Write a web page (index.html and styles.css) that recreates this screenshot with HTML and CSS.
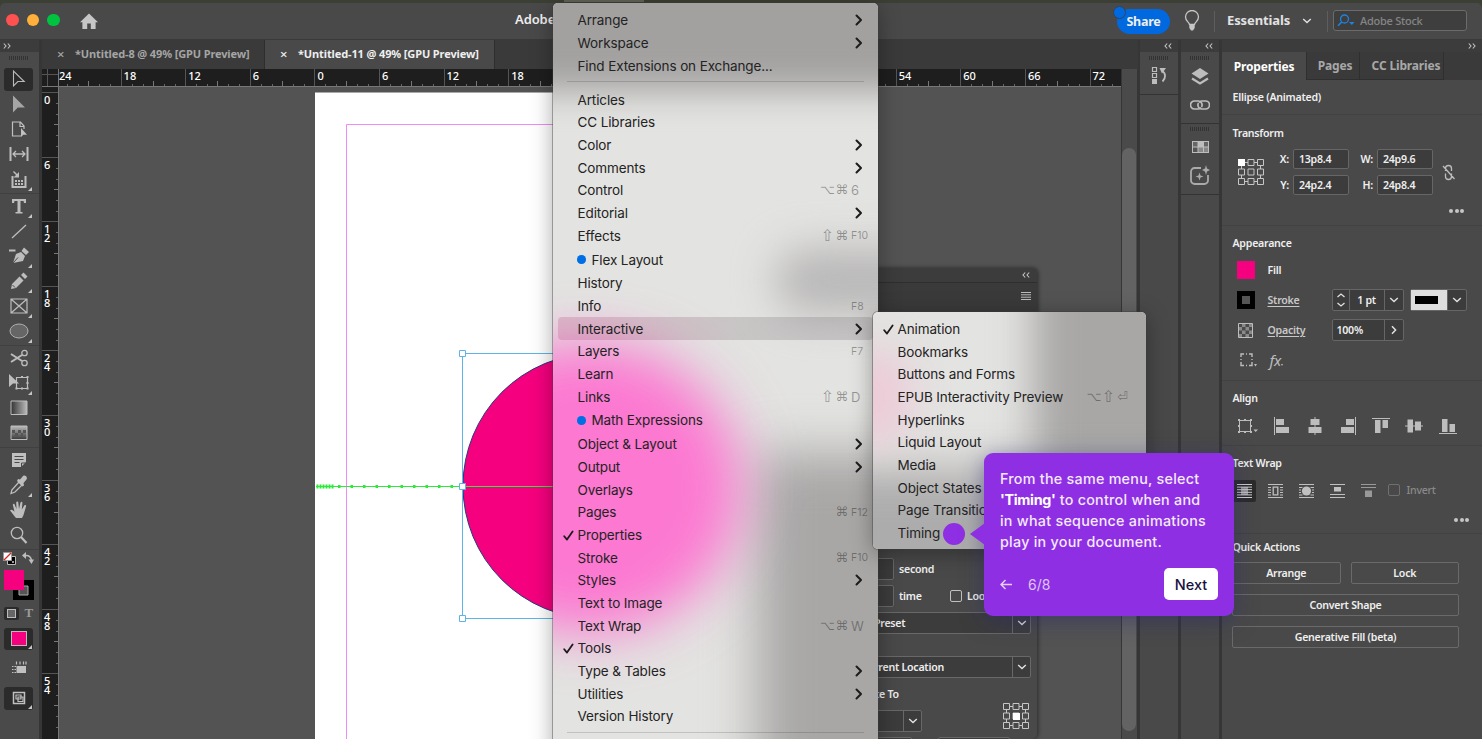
FILE: index.html
```html
<!DOCTYPE html>
<html lang="en">
<head>
    <meta charset="UTF-8">
    <meta name="viewport" content="width=device-width, initial-scale=1.0">
    <title>Adobe InDesign</title>
    <link rel="stylesheet" href="styles.css">
</head>
<body>
<svg class="defs" width="0" height="0">
    <symbol id="chev" viewBox="0 0 8 12"><path d="M1.5 1.5 6 6 1.5 10.5" fill="none" stroke="#1c1c1c" stroke-width="2" stroke-linecap="round" stroke-linejoin="round"/></symbol>
    <symbol id="check" viewBox="0 0 11 11"><path d="M1.2 6.2 4 9.6 9.6 1.4" fill="none" stroke="#1c1c1c" stroke-width="1.8" stroke-linecap="round" stroke-linejoin="round"/></symbol>
    <symbol id="down" viewBox="0 0 10 6"><path d="M1.2 1 5 4.6 8.8 1" fill="none" stroke="#e0e0e0" stroke-width="1.4"/></symbol>
    <symbol id="left2" viewBox="0 0 8 6"><path d="M3.2.5 1 3l2.2 2.5M7.2.5 5 3l2.2 2.5" fill="none" stroke="#c4c4c4" stroke-width="1.1"/></symbol>
    <symbol id="right2" viewBox="0 0 8 6"><path d="M.8.5 3 3 .8 5.5M4.8.5 7 3 4.8 5.5" fill="none" stroke="#c4c4c4" stroke-width="1.1"/></symbol>
    <symbol id="proxy" viewBox="0 0 26 26"><path d="M.5.5h6v6h-6zM10 .5h6v6h-6zM19.5.5h6v6h-6zM.5 10h6v6h-6zM10 10h6v6h-6zM19.5 10h6v6h-6zM.5 19.5h6v6h-6zM10 19.5h6v6h-6zM19.5 19.5h6v6h-6zM6.500 3.500h3.500M16 3.500h3.500M6.500 22.500h3.500M16 22.500h3.500M3.500 6.500v3.500M3.500 16v3.500M22.500 6.500v3.500M22.500 16v3.500" fill="none" stroke="#c6c6c6"/></symbol>
</svg>

<div class="app">
    <div class="mac-bar"><div class="mac-item"></div></div>
    <div class="title-bar">
        <div class="lights"><i class="red"></i><i class="amber"></i><i class="green"></i></div>
        <svg class="home" width="18" height="17" viewBox="0 0 18 17"><path d="M9 .5 0 9.200h2.400V16h4.800v-5.500h3.600V16h4.800V9.200H18z" fill="#c6c6c6"/></svg>
        <div class="app-name">Adobe</div>
        <div class="title-right">
            <div class="share">Share</div>
            <svg class="bulb" width="16" height="22" viewBox="0 0 16 22"><path d="M5.500 14.500C5 12 1.500 11 1.500 7a6.500 6.500 0 0 1 13 0c0 4-3.500 5-4 7.500z" fill="none" stroke="#c6c6c6" stroke-width="1.300"/><path d="M5.300 15h5.400v3L9 20.500H7L5.300 18z" fill="#c6c6c6"/></svg>
            <div class="bar"></div>
            <div class="workspace-name">Essentials</div>
            <svg class="ws-chev" width="10" height="6"><use href="#down"/></svg>
            <div class="bar"></div>
            <div class="search">
                <svg width="18" height="13" viewBox="0 0 18 13"><circle cx="7.500" cy="5" r="4" fill="none" stroke="#1f83dc" stroke-width="1.300"/><path d="M4.700 8 1 11.800" stroke="#1f83dc" stroke-width="1.600"/><path d="M12 8h5.500l-2.700 3z" fill="#1f83dc"/></svg>
                <span>Adobe Stock</span>
            </div>
        </div>
    </div>

    <div class="workspace">
        <div class="tools">
            <div class="dock-head left"><svg width="8" height="6"><use href="#right2"/></svg></div>
            <div class="grip"></div>
            <div class="tool-group first">
                <div class="tool active"><svg viewBox="0 0 20 20"><path d="M4.500 2v15l4.300-4.500h6.400z" fill="none" stroke="#b9b9b9" stroke-width="1.100"/></svg></div>
                <div class="tool"><svg viewBox="0 0 20 20"><path d="M4 1.500v17l4.800-5h7.200z" fill="#a5a5a5"/></svg></div>
                <div class="tool"><svg viewBox="0 0 20 20"><path d="M12 17H3.500V3h8l3.500 4v3M11 3v4.500h4" fill="none" stroke="#c0c0c0" stroke-width="1.200"/><path d="M12 9v9l2.300-2.200H18z" fill="#c0c0c0"/></svg></div>
                <div class="tool"><svg viewBox="0 0 20 20"><path d="M1.500 3v14M18.500 3v14" stroke="#bdbdbd" stroke-width="2"/><path d="M4 10h12M7 7l-3 3 3 3M13 7l3 3-3 3" fill="none" stroke="#bdbdbd" stroke-width="1.300"/></svg></div>
                <div class="tool more"><svg viewBox="0 0 20 20"><path d="M3.500 7v11h13V7" fill="none" stroke="#bdbdbd" stroke-width="2"/><path d="M6 11h2v2H6zM9 11h2v2H9zM12 11h2v2h-2zM6 14h2v2H6zM9 14h2v2H9zM12 14h2v2h-2zM10 3v5.500H4.500z" fill="#bdbdbd"/><path d="m4.500 2.500 4 4" stroke="#bdbdbd" stroke-width="1.500"/></svg></div>
            </div>
            <div class="tool-group">
                <div class="tool more"><svg viewBox="0 0 20 20"><path d="M3 3h14v4h-2l-.5-2h-3v11h2v1.500h-7V16h2V5h-3L5 7H3z" fill="#bdbdbd"/></svg></div>
                <div class="tool"><svg viewBox="0 0 20 20"><path d="M3 17 17 4" stroke="#bdbdbd" stroke-width="1.300"/></svg></div>
                <div class="tool more"><svg viewBox="0 0 20 20"><path d="M-1.500 4.500h8" stroke="#bdbdbd" stroke-width="2"/><path d="m4 17 3-9 5-2 4 4-2 5z" fill="#bdbdbd"/><path d="m4 17 5-5.500" stroke="#4a4a4a"/><path d="m12.500 5 2.500-3.500L20 6l-3 3z" fill="#bdbdbd"/></svg></div>
                <div class="tool more"><svg viewBox="0 0 20 20"><path d="m2 18 1-5 7.500-7.500 4 4L7 17zM12 4l2.500-2.500 4 4L16 8z" fill="#bdbdbd"/><path d="m3.500 14 2.500 2.500" stroke="#4a4a4a"/></svg></div>
                <div class="tool more"><svg viewBox="0 0 20 20"><path d="M2 3h16v14H2zM2 3l16 14M18 3 2 17" fill="none" stroke="#bdbdbd" stroke-width="1.200"/></svg></div>
                <div class="tool more"><svg viewBox="0 0 20 20"><ellipse cx="10" cy="10" rx="9" ry="7" fill="#666" stroke="#b0b0b0"/></svg></div>
            </div>
            <div class="tool-group">
                <div class="tool"><svg viewBox="0 0 20 20"><path d="m2 6 11 7M2 14l11-7" stroke="#bdbdbd" stroke-width="2"/><circle cx="15.500" cy="5" r="2.700" fill="none" stroke="#bdbdbd" stroke-width="1.300"/><circle cx="15.500" cy="15" r="2.700" fill="none" stroke="#bdbdbd" stroke-width="1.300"/></svg></div>
                <div class="tool more"><svg viewBox="0 0 20 20"><path d="M7.500 4.500h11v11h-11z" fill="none" stroke="#bdbdbd" stroke-width="1.200"/><path d="M12 3h2v2h-2zM17.500 3h2v2h-2zM17.500 9h2v2h-2zM17.500 14.500h2v2h-2zM12 14.500h2v2h-2zM6.500 14.500h2v2h-2zM0 1v13l4-3.500h6z" fill="#bdbdbd"/></svg></div>
                <div class="tool"><svg viewBox="0 0 20 20"><linearGradient id="fade"><stop stop-color="#333"/><stop offset="1" stop-color="#bbb"/></linearGradient><path d="M2 3h16v13.500H2z" fill="url(#fade)" stroke="#bdbdbd"/></svg></div>
                <div class="tool"><svg viewBox="0 0 20 20"><linearGradient id="fade-v" x2="0" y2="1"><stop stop-color="#bbb"/><stop offset="1" stop-color="#3a3a3a"/></linearGradient><path d="M2 3h16v13.500H2z" fill="url(#fade-v)" stroke="#bdbdbd"/><path d="M3 7h3v3H3zM9 7h3v3H9zM14 7h3v3h-3zM6 10h3v3H6zM12 10h2v3h-2z" fill="#555"/></svg></div>
            </div>
            <div class="tool-group">
                <div class="tool"><svg viewBox="0 0 20 20"><path d="M3 3h14v9l-5 5H3z" fill="#c0c0c0"/><path d="M5.500 6.500h9M5.500 9.500h9M5.500 12.500h5" stroke="#4a4a4a" stroke-width="1.200"/><path d="M12.500 17v-4h4.500" fill="none" stroke="#4a4a4a"/></svg></div>
                <div class="tool more"><svg viewBox="0 0 20 20"><path d="m10 7 3 3-7 7-4 1.500.8-3.500z" fill="none" stroke="#bdbdbd" stroke-width="1.300"/><path d="m9 4 2 .5 3-3.500c2-1.500 5 1 3.500 3.500L14.500 8l.5 2.500-1.500 1L8 6z" fill="#bdbdbd"/></svg></div>
                <div class="tool"><svg viewBox="0 0 20 20"><path d="M7 18c-2-2-4-5.500-6-7.500 1-1.500 2.800-.5 4.500 1.200L3.800 4.800c.3-1.500 1.800-1 2 .2L7.500 9 7.200 2.500c.3-1.500 2-1.300 2.100 0L10 9l1.500-6.500c.5-1.300 2-1 1.900.5L12.800 9.500l2.500-4c.8-1 2.200-.3 1.700 1L14.500 15 13 18z" fill="#bdbdbd"/></svg></div>
                <div class="tool"><svg viewBox="0 0 20 20"><circle cx="8" cy="8" r="5.700" fill="none" stroke="#bdbdbd" stroke-width="1.300"/><path d="m12 12 5.500 6" stroke="#bdbdbd" stroke-width="2.200"/></svg></div>
            </div>
            <div class="tool-group swatches">
                <div class="mini-row">
                    <svg width="13" height="13" viewBox="0 0 13 13"><path d="M4.500 4.500h8v8h-8z" fill="#000" stroke="#bbb"/><path d="M.5.5h8v8h-8z" fill="#fff" stroke="#999"/><path d="m1 8 7-7" stroke="#e02020" stroke-width="1.200"/><path d="M9 9h2v2H9z" fill="#999"/></svg>
                    <svg width="12" height="12" viewBox="0 0 12 12"><path d="M3 3.500c4-.5 6 1.500 6.500 5" fill="none" stroke="#bdbdbd" stroke-width="1.500"/><path d="M4 0v7L0 3.500zM6.500 7.500H12L9.500 12z" fill="#bdbdbd"/></svg>
                </div>
                <svg class="fill-stroke" width="30" height="30" viewBox="0 0 30 30"><path d="M9 10h21v20H9z"/><path d="M15 16h9v9h-9z" fill="#555" stroke="#aaa"/><path d="M0 0h20v20H0z" fill="#f5007e"/></svg>
                <div class="mini-row target">
                    <div class="mini-box"><i></i></div>
                    <span>T</span>
                </div>
                <div class="tool active more apply"><i></i></div>
                <div class="tool tall"><svg viewBox="0 0 20 20"><path d="M7.500 8H17v7H7.500z" fill="#c0c0c0"/><path d="M7.500 3.500v3M11 3.500v3M14.500 3.500v3M17 3.500v3" stroke="#c0c0c0" stroke-width="1.200"/><path d="M3 8.500h4M3 11.500h4M3 14.500h4" stroke="#c0c0c0" stroke-width="1.200" stroke-dasharray="1.500 1"/></svg></div>
                <div class="tool active more mode"><svg viewBox="0 0 20 20"><path d="M4.500 4.500h11v11h-11z" fill="none" stroke="#c0c0c0" stroke-width="1.500"/><path d="M7 7h5v4H7zM9 9h5v4.500H9z" fill="none" stroke="#c0c0c0" stroke-width="1.200"/></svg></div>
            </div>
        </div>

        <div class="document">
            <div class="tabs">
                <div class="tab"><span class="x">×</span>*Untitled-8 @ 49% [GPU Preview]</div>
                <div class="tab current"><span class="x">×</span>*Untitled-11 @ 49% [GPU Preview]</div>
            </div>
            <div class="view">
                <div class="view-main">
                    <div class="ruler-top">
                        <div class="corner"></div>
                        <div class="ruler-h">
                            <span>24</span><span>18</span><span>12</span><span>6</span><span>0</span><span>6</span><span>12</span><span>18</span><span></span><span></span><span></span><span></span><span></span><span>54</span><span>60</span><span>66</span><span>72</span>
                        </div>
                    </div>
                    <div class="view-row">
                        <div class="ruler-v">
                            <span>0</span><span>6</span><span>1<br>2</span><span>1<br>8</span><span>2<br>4</span><span>3<br>0</span><span>3<br>6</span><span>4<br>2</span><span>4<br>8</span><span>5<br>4</span>
                        </div>
                        <svg class="canvas" width="1062" height="652" viewBox="59 87 1062 652">
                            <rect x="315" y="92.500" width="440" height="660" fill="#fff"/>
                            <path d="M346.500 739V124.500H720V739" fill="none" stroke="#ee8df5"/>
                            <circle cx="595.500" cy="486" r="132.500" fill="#f5007e" stroke="#26397c"/>
                            <rect x="462.500" y="353.500" width="266" height="265" fill="none" stroke="#5fb4e5"/>
                            <path d="M316 486.500h300" stroke="#2ee83c" stroke-width="1.200"/>
                            <path d="M316.500 486.500h18" stroke="#2ee83c" stroke-width="4" stroke-dasharray="2 1"/>
                            <path d="M338 486.500h122" stroke="#2ee83c" stroke-width="3" stroke-dasharray="2.500 10"/>
                            <path d="M459.500 350.500h6v6h-6zM459.500 483.500h6v6h-6zM459.500 615.500h6v6h-6z" fill="#fff" stroke="#5fb4e5"/>
                        </svg>
                    </div>
                </div>
                <div class="scroll"><div class="thumb"></div></div>
            </div>
        </div>

        <div class="dock">
            <div class="dock-head"><svg width="8" height="6"><use href="#left2"/></svg></div>
            <div class="dock-group one">
                <div class="grip"></div>
                <svg width="18" height="20" viewBox="0 0 18 20"><path d="M2.500 1.500h4v4h-4zM2.500 7.500h4v4h-4z" fill="none" stroke="#bdbdbd" stroke-width="1.200"/><path d="M2 13h5v5H2zM9.500 2H16l-4 5.500z" fill="#bdbdbd"/><path d="M12 5c4 2 4 7 .5 10.500" fill="none" stroke="#bdbdbd" stroke-width="1.800"/></svg>
            </div>
        </div>
        <div class="dock">
            <div class="dock-head"><svg width="8" height="6"><use href="#left2"/></svg></div>
            <div class="dock-group two">
                <div class="grip"></div>
                <svg width="18" height="18" viewBox="0 0 18 18"><path d="m9 0 8.500 5.500L9 11 .5 5.500z" fill="#bdbdbd"/><path d="m1 10.500 8 5 8-5" fill="none" stroke="#bdbdbd" stroke-width="2.200"/></svg>
                <svg width="20" height="10" viewBox="0 0 20 10"><path d="M11 7.500A4 4 0 0 1 8.500 9h-4a4 4 0 0 1 0-8h4a4 4 0 0 1 3 6M9 2.500A4 4 0 0 1 11.500 1h4a4 4 0 0 1 0 8h-4a4 4 0 0 1-3-6" fill="none" stroke="#bdbdbd" stroke-width="1.700"/></svg>
            </div>
            <div class="dock-group three">
                <div class="grip"></div>
                <svg width="17" height="12" viewBox="0 0 17 12"><path d="M0 0h17v12H0z" fill="#bdbdbd"/><path d="M1 1h4.500v4.500H1zM12 1h4v4.500h-4z" fill="#666"/><path d="M1 6.500h4.500V11H1z" fill="#555"/><path d="M6.500 6.500H11V11H6.500zM12 6.500h4V11h-4z" fill="#888"/></svg>
                <svg width="20" height="21" viewBox="0 0 20 21"><path d="M11 3H4.500A3.500 3.500 0 0 0 1 6.500v9A3.500 3.500 0 0 0 4.500 19h10a3.500 3.500 0 0 0 3.500-3.500V10" fill="none" stroke="#aaa" stroke-width="1.800"/><path d="m16 0 1 3.500L20 5l-3 1.500L16 10l-1-3.500L12 5l3-1.500zM9.500 7.500l1 3 3 1-3 1-1 3-1-3-3-1 3-1z" fill="#aaa"/></svg>
            </div>
        </div>

        <div class="props">
            <div class="dock-head"><svg width="8" height="6"><use href="#right2"/></svg></div>
            <div class="props-tabs">
                <div class="ptab on">Properties</div><div class="ptab">Pages</div><div class="ptab">CC Libraries</div>
            </div>
            <div class="section object">Ellipse (Animated)</div>
            <div class="section transform">
                <h4>Transform</h4>
                <div class="xform">
                    <svg class="proxy" width="26" height="26"><use href="#proxy"/><rect width="7" height="7" fill="#fff"/></svg>
                    <div class="fields">
                        <label>X:</label><div class="input">13p8.4</div><label>W:</label><div class="input">24p9.6</div>
                        <label>Y:</label><div class="input">24p2.4</div><label>H:</label><div class="input">24p8.4</div>
                    </div>
                    <svg class="unlink" width="14" height="17" viewBox="0 0 14 17"><path d="M3.500 7V4.500a3 3 0 0 1 6 0V7M3.500 9.500v3a3 3 0 0 0 6 0v-3M1 2l11.500 13" fill="none" stroke="#bdbdbd" stroke-width="1.300"/></svg>
                </div>
                <div class="dots"><i></i><i></i><i></i></div>
            </div>
            <div class="section appearance">
                <h4>Appearance</h4>
                <div class="arow"><div class="sw pink"></div><span>Fill</span></div>
                <div class="arow"><div class="sw black"></div><span class="link">Stroke</span>
                    <div class="combo stroke-w"><div class="cell step"><svg width="8" height="14" viewBox="0 0 8 14"><path d="m.5 4 3.500-3 3.500 3M.5 10 4 13l3.500-3" fill="none" stroke="#e0e0e0" stroke-width="1.300"/></svg></div><div class="cell val">1 pt</div><div class="cell drop"><svg width="10" height="6"><use href="#down"/></svg></div></div>
                    <div class="combo style"><div class="cell light"><i></i></div><div class="cell drop"><svg width="10" height="6"><use href="#down"/></svg></div></div>
                </div>
                <div class="arow"><svg class="sw-opacity" width="15" height="15" viewBox="0 0 15 15"><path d="M.5.5h14v14H.5z" fill="#4a4a4a" stroke="#bdbdbd"/><path d="M4 1h3.500v3H4zM11 1h3v3h-3zM1 4h3v3.500H1zM7.500 4H11v3.500H7.500zM4 7.500h3.500V11H4zM11 7.500h3V11h-3zM1 11h3v3H1zM7.500 11H11v3H7.500z" fill="#8a8a8a"/></svg><span class="link">Opacity</span>
                    <div class="combo opacity"><div class="cell val">100%</div><div class="cell drop"><svg width="6" height="10" viewBox="0 0 6 10"><path d="M1 1.200 4.600 5 1 8.800" fill="none" stroke="#e0e0e0" stroke-width="1.500"/></svg></div></div>
                </div>
                <div class="arow last">
                    <svg width="17" height="14" viewBox="0 0 17 14"><path d="M1 4V1h3M9 1h3v3M12 9v3.500H9M4 12.500H1V9M6 1h1M6 12.500h1M1 6v1M12 6v1" fill="none" stroke="#bdbdbd" stroke-width="1.400"/><path d="M14 11h3l-1.500 2.500z" fill="#bdbdbd"/></svg>
                    <span class="fx">fx</span>
                </div>
            </div>
            <div class="section align">
                <h4>Align</h4>
                <div class="align-icons">
                    <svg width="21" height="16" viewBox="0 0 21 16"><path d="M2.500 2.500h11v11h-11z" fill="none" stroke="#bdbdbd"/><path d="M1 1h2v2H1zM7 1h2v2H7zM13 1h2v2h-2zM1 7h2v2H1zM13 7h2v2h-2zM1 13h2v2H1zM7 13h2v2H7zM13 13h2v2h-2zM16.500 11.500h4.500L18.700 14z" fill="#bdbdbd"/></svg>
                    <svg width="18" height="18" viewBox="0 0 18 18"><path d="M1.500 0v18" stroke="#bdbdbd"/><path d="M3 2h8v6H3zM3 10h13v6H3z" fill="#bdbdbd"/></svg>
                    <svg width="18" height="18" viewBox="0 0 18 18"><path d="M9 0v18" stroke="#bdbdbd"/><path d="M4.500 2h9v6h-9zM2.500 10h13v6h-13z" fill="#bdbdbd"/></svg>
                    <svg width="18" height="18" viewBox="0 0 18 18"><path d="M16.500 0v18" stroke="#bdbdbd"/><path d="M7 2h8v6H7zM2 10h13v6H2z" fill="#bdbdbd"/></svg>
                    <svg width="18" height="18" viewBox="0 0 18 18"><path d="M0 1.500h18" stroke="#bdbdbd"/><path d="M3 3h5.500v13H3zM10.500 3h5.500v8h-5.500z" fill="#bdbdbd"/></svg>
                    <svg width="18" height="18" viewBox="0 0 18 18"><path d="M0 9h18" stroke="#bdbdbd"/><path d="M2.500 2.500h5.500v13H2.500zM10 4.500h6v9h-6z" fill="#bdbdbd"/></svg>
                    <svg width="18" height="18" viewBox="0 0 18 18"><path d="M0 16.500h18" stroke="#bdbdbd"/><path d="M3 2h5.500v13H3zM10.500 7h5.500v8h-5.500z" fill="#bdbdbd"/></svg>
                </div>
            </div>
            <div class="section wrap">
                <h4>Text Wrap</h4>
                <div class="wrap-icons">
                    <div class="wi on"><svg width="15" height="14" viewBox="0 0 15 14"><path d="M0 .5h15M0 3.100h15M0 5.700h15M0 8.300h15M0 10.900h15M0 13.500h15" stroke="#d0d0d0"/><path d="M4 3h7v8H4z" fill="#d0d0d0" opacity=".6"/></svg></div>
                    <div class="wi"><svg width="15" height="14" viewBox="0 0 15 14"><path d="M0 .5h15M0 3.500h3M0 6h3M0 8.500h3M12 3.500h3M12 6h3M12 8.500h3M0 11h3M12 11h3M0 13.500h15" stroke="#c0c0c0"/><path d="M5.200 3.200h4.600v7.600H5.200z" fill="none" stroke="#c0c0c0" stroke-width="1.300"/></svg></div>
                    <div class="wi"><svg width="15" height="14" viewBox="0 0 15 14"><path d="M0 .5h15M0 3.500h3.500M0 6h2M0 8.500h2M11.500 3.500H15M13 6h2M13 8.500h2M0 11h3.500M11.500 11H15M0 13.500h15" stroke="#c0c0c0"/><circle cx="7.500" cy="7" r="4.600" fill="#c0c0c0"/></svg></div>
                    <div class="wi"><svg width="15" height="14" viewBox="0 0 15 14"><path d="M0 .5h15M0 10.500h15M0 13.500h15" stroke="#c0c0c0" stroke-width="1.200"/><path d="M4 3h7v4.500H4z" fill="#c0c0c0"/></svg></div>
                    <div class="wi dim"><svg width="15" height="14" viewBox="0 0 15 14"><path d="M0 .5h15M0 3.500h15" stroke="#999" stroke-width="1.200"/><path d="M4 6.500h7V13H4z" fill="#999"/></svg></div>
                    <div class="checkbox"></div><span>Invert</span>
                </div>
                <div class="dots"><i></i><i></i><i></i></div>
            </div>
            <div class="section quick">
                <h4>Quick Actions</h4>
                <div class="buttons">
                    <div class="btn half">Arrange</div><div class="btn half">Lock</div>
                    <div class="btn">Convert Shape</div>
                    <div class="btn">Generative Fill (beta)</div>
                </div>
            </div>
        </div>
    </div>
</div>

<!-- Animation panel, floating -->
<div class="float-panel">
    <div class="fp-head"><svg width="8" height="6"><use href="#left2"/></svg></div>
    <div class="fp-tabs"><svg width="10" height="8" viewBox="0 0 10 8"><path d="M0 .5h10M0 2.800h10M0 5.200h10M0 7.500h10" stroke="#bdbdbd"/></svg></div>
    <div class="fp-body">
        <div class="fp-row"><div class="fp-input"></div><span>second</span></div>
        <div class="fp-row"><div class="fp-input"></div><span class="time">time</span><div class="fp-check"></div><span>Loop</span></div>
        <div class="fp-select preset"><span>Preset</span><div><svg width="10" height="6"><use href="#down"/></svg></div></div>
        <div class="fp-select location"><span>Current Location</span><div><svg width="10" height="6"><use href="#down"/></svg></div></div>
        <div class="fp-label">Animate To</div>
        <div class="fp-row origin"><div class="fp-select small"><span></span><div><svg width="10" height="6"><use href="#down"/></svg></div></div>
            <svg width="26" height="26"><use href="#proxy"/><rect x="10" y="10" width="7" height="7" fill="#fff"/></svg></div>
        <div class="fp-row tail"><div class="fp-input"></div><div class="fp-input wide"></div></div>
    </div>
</div>

<!-- Window menu -->
<div class="menu main-menu">
    <div class="glass"><i class="top"></i><i class="mid"></i><i class="side"></i><i class="glow"></i></div>
    <div class="items">
        <div class="item">Arrange<svg class="chev"><use href="#chev"/></svg></div>
        <div class="item">Workspace<svg class="chev"><use href="#chev"/></svg></div>
        <div class="item">Find Extensions on Exchange...</div>
        <div class="sep"></div>
        <div class="item">Articles</div>
        <div class="item">CC Libraries</div>
        <div class="item">Color<svg class="chev"><use href="#chev"/></svg></div>
        <div class="item">Comments<svg class="chev"><use href="#chev"/></svg></div>
        <div class="item">Control<kbd><b>⌥</b><b>⌘</b><u>6</u></kbd></div>
        <div class="item">Editorial<svg class="chev"><use href="#chev"/></svg></div>
        <div class="item">Effects<kbd><b class="shift">⇧</b><b>⌘</b><u class="fn">F10</u></kbd></div>
        <div class="item new"><i class="dot"></i>Flex Layout</div>
        <div class="item">History</div>
        <div class="item">Info<kbd><u class="fn">F8</u></kbd></div>
        <div class="item hover">Interactive<svg class="chev"><use href="#chev"/></svg></div>
        <div class="item">Layers<kbd><u class="fn">F7</u></kbd></div>
        <div class="item">Learn</div>
        <div class="item">Links<kbd><b class="shift">⇧</b><b>⌘</b><u>D</u></kbd></div>
        <div class="item new"><i class="dot"></i>Math Expressions</div>
        <div class="item">Object &amp; Layout<svg class="chev"><use href="#chev"/></svg></div>
        <div class="item">Output<svg class="chev"><use href="#chev"/></svg></div>
        <div class="item">Overlays</div>
        <div class="item">Pages<kbd><b>⌘</b><u class="fn">F12</u></kbd></div>
        <div class="item"><svg class="check"><use href="#check"/></svg>Properties</div>
        <div class="item">Stroke<kbd><b>⌘</b><u class="fn">F10</u></kbd></div>
        <div class="item">Styles<svg class="chev"><use href="#chev"/></svg></div>
        <div class="item">Text to Image</div>
        <div class="item">Text Wrap<kbd><b>⌥</b><b>⌘</b><u>W</u></kbd></div>
        <div class="item"><svg class="check"><use href="#check"/></svg>Tools</div>
        <div class="item">Type &amp; Tables<svg class="chev"><use href="#chev"/></svg></div>
        <div class="item">Utilities<svg class="chev"><use href="#chev"/></svg></div>
        <div class="item">Version History</div>
        <div class="sep"></div>
    </div>
</div>

<!-- Interactive submenu -->
<div class="menu sub-menu">
    <div class="glass"><i class="side"></i><i class="base"></i><i class="glow"></i></div>
    <div class="items">
        <div class="item"><svg class="check"><use href="#check"/></svg>Animation</div>
        <div class="item">Bookmarks</div>
        <div class="item">Buttons and Forms</div>
        <div class="item">EPUB Interactivity Preview<kbd><b>⌥</b><b class="shift">⇧</b><b>⏎</b></kbd></div>
        <div class="item">Hyperlinks</div>
        <div class="item">Liquid Layout</div>
        <div class="item">Media</div>
        <div class="item">Object States</div>
        <div class="item">Page Transitions</div>
        <div class="item">Timing</div>
    </div>
</div>

<!-- Tour step -->
<div class="beacon"></div>
<div class="tour">
    <p>From the same menu, select<br><b>'Timing'</b> to control when and<br>in what sequence animations<br>play in your document.</p>
    <div class="tour-nav">
        <svg width="13" height="11" viewBox="0 0 13 11"><path d="M12 5.500H1.200M5.500 1 1 5.500 5.500 10" fill="none" stroke="#e4d0fa" stroke-width="1.500"/></svg>
        <span>6/8</span>
        <button>Next</button>
    </div>
</div>
</body>
</html>
```

FILE: styles.css
```css
* {
    box-sizing: border-box;
}
body {
    margin: 0;
    width: 1482px;
    height: 739px;
    overflow: hidden;
    position: relative;
    background: #3c4034;
    font-family: "Noto Sans", "Open Sans", sans-serif;
    font-size: 10.600px;
    letter-spacing: -0.250px;
    font-weight: 600;
    color: #efefef;
}
svg {
    display: block;
    flex: none;
}
.defs {
    position: absolute;
}
.app {
    display: flex;
    flex-direction: column;
    height: 739px;
}
.mac-bar {
    height: 3px;
    flex: none;
    padding-left: 564px;
}
.mac-item {
    width: 80px;
    height: 2px;
    background: #63655a;
}
.title-bar {
    display: flex;
    align-items: center;
    height: 37px;
    flex: none;
    background: #494949;
    border-radius: 5px 5px 0 0;
    border-bottom: 1px solid #3a3a3a;
    padding-left: 6px;
}
.lights {
    display: flex;
    gap: 8px;
    width: 74px;
    margin-top: -2px;
}
.lights i {
    width: 12.500px;
    height: 12.500px;
    border-radius: 50%;
}
.red { background: #ff5150; }
.amber { background: #ffb03a; }
.green { background: #00c43f; }
.home {
    margin-right: 417px;
}
.app-name {
    font-size: 13px;
    width: 39px;
    margin-top: -5px;
    letter-spacing: -0.100px;
    white-space: nowrap;
}
.title-right {
    display: flex;
    align-items: center;
    margin-left: auto;
    padding-right: 15px;
}
.share {
    position: relative;
    width: 53px;
    height: 25px;
    line-height: 25px;
    border-radius: 13px;
    background: #0069e0;
    text-align: center;
    font-size: 12.500px;
    font-weight: 700;
    margin-right: 14px;
}
.share::before {
    content: "";
    position: absolute;
    left: -4px;
    top: -3px;
    width: 11px;
    height: 11px;
    border-radius: 50%;
    background: #0069e0;
    border: 1px solid #345;
}
.bulb {
    margin-right: 14px;
}
.bar {
    width: 1px;
    height: 21px;
    background: #5e5e5e;
}
.workspace-name {
    font-size: 13px;
    font-weight: 700;
    color: #e2e2e2;
    width: 63px;
    margin: -3px 12px 0;
    letter-spacing: -0.100px;
}
.ws-chev {
    margin-right: 15px;
}
.search {
    display: flex;
    align-items: center;
    gap: 5px;
    width: 134px;
    height: 21px;
    margin: -2px 0 0 5px;
    padding-left: 3px;
    background: #3e3e3e;
    border: 1px solid #6b6b6b;
    border-radius: 3px;
    color: #858585;
    font-size: 11px;
    font-weight: 500;
}
.workspace {
    display: flex;
    height: 699px;
    background: #363636;
}

/* left toolbar */
.tools {
    width: 39px;
    margin-right: 3px;
    flex: none;
    background: #4a4a4a;
}
.dock-head {
    height: 12px;
    display: flex;
    align-items: center;
    justify-content: flex-end;
    padding-right: 6px;
    background: #3c3c3c;
}
.dock-head.left {
    justify-content: flex-start;
    padding-left: 3px;
}
.grip {
    width: 20px;
    height: 4px;
    background: repeating-linear-gradient(90deg, #333 0 1px, #4a4a4a 1px 2px);
}
.tools .grip {
    margin: 4px 0 7.500px 9px;
}
.tool-group {
    margin-top: 1px;
    border-top: 1px solid #404040;
}
.tool-group.first {
    margin-top: 0;
    border: none;
}
.tool {
    position: relative;
    display: flex;
    align-items: center;
    justify-content: center;
    width: 29px;
    height: 25px;
    margin-left: 4px;
    border-radius: 3px;
}
.tool svg {
    width: 20px;
    height: 20px;
}
.tool.active {
    background: #2b2b2b;
}
.tool-group.first .tool.active {
    height: 23px;
    margin-top: 1px;
    margin-bottom: 1px;
}
.tool.more::after {
    content: "";
    position: absolute;
    right: 1px;
    bottom: 1px;
    border-left: 4px solid transparent;
    border-bottom: 4px solid #c6c6c6;
}
.mini-row {
    display: flex;
    justify-content: space-between;
    align-items: center;
    height: 17px;
    padding: 0 5px 0 3px;
}
.fill-stroke {
    margin: 3px 0 7px 4px;
}
.mini-row.target {
    height: 13px;
    padding: 0 6px 0 4px;
    color: #9a9a9a;
    font: bold 13px "Liberation Serif", serif;
}
.mini-box {
    width: 15px;
    height: 13px;
    padding: 2px 3px;
    background: #2b2b2b;
    border-radius: 2px;
}
.mini-box i {
    display: block;
    width: 9px;
    height: 9px;
    background: #666;
    border: 1px solid #bbb;
}
.apply {
    height: 22px;
    margin-top: 8px;
}
.apply i {
    width: 16px;
    height: 15px;
    background: #f5007e;
    border: 1px solid #bbb;
}
.tool.tall {
    height: 37px;
}
.mode {
    height: 23px;
}

/* document area */
.document {
    display: flex;
    flex-direction: column;
    width: 1096px;
    flex: none;
    margin-right: 2px;
}
.tabs {
    display: flex;
    height: 29px;
    background: #3a3a3a;
}
.tab {
    display: flex;
    align-items: center;
    width: 223px;
    padding: 0 0 2px 15px;
    border-right: 1px solid #2e2e2e;
    color: #a5a5a5;
    font-size: 11px;
    font-weight: 700;
    letter-spacing: -0.120px;
    white-space: nowrap;
}
.tab.current {
    width: 230px;
    background: #494949;
    color: #efefef;
}
.tab .x {
    width: 18px;
    font-size: 13px;
    font-weight: 500;
}
.view {
    display: flex;
    flex: 1;
}
.view-main {
    width: 1079px;
}
.ruler-top {
    display: flex;
    height: 18px;
    background: #1e1e1e;
    border-bottom: 1px solid #777;
}
.corner {
    width: 17px;
    flex: none;
    border-right: 1px solid #777;
    background: linear-gradient(#555, #555) 5px 0 / 1px 17px no-repeat, linear-gradient(#555, #555) 0 5px / 17px 1px no-repeat;
}
.ruler-h {
    display: flex;
    overflow: hidden;
    width: 1062px;
}
.ruler-h span {
    flex: none;
    width: 64.600px;
    height: 17px;
    padding-left: 2px;
    border-left: 1px solid #555;
    line-height: 14px;
    font-size: 11px;
    letter-spacing: 0;
    font-weight: 500;
    color: #fff;
    background: linear-gradient(#777, #777) 31px 12px / 1px 5px no-repeat,
        repeating-linear-gradient(90deg, transparent 0 9.770px, #666 9.770px 10.770px) 0 15px / 100% 2px no-repeat;
}
.ruler-h span:first-child {
    margin-left: -3px;
}
.view-row {
    display: flex;
}
.ruler-v {
    width: 17px;
    height: 652px;
    flex: none;
    padding-top: 5px;
    overflow: hidden;
    background: #1e1e1e;
    border-right: 1px solid #777;
}
.ruler-v span {
    display: block;
    height: 64.600px;
    padding: 2px 0 0 2px;
    border-top: 1px solid #555;
    line-height: 9px;
    font-size: 11px;
    font-weight: 500;
    color: #fff;
    background: linear-gradient(#777, #777) 12px 31px / 4px 1px no-repeat,
        repeating-linear-gradient(transparent 0 9.770px, #666 9.770px 10.770px) 14px 0 / 2px 100% no-repeat;
}
.canvas {
    background: #535353;
}
.scroll {
    width: 15px;
    margin-left: 1px;
    padding-top: 79px;
    background: #4a4a4a;
}
.thumb {
    height: 583px;
    margin-right: 1px;
    border-radius: 7px;
    background: #636363;
}

/* collapsed docks */
.dock {
    width: 38px;
    flex: none;
    margin-right: 3px;
    background: #494949;
}
.dock-head {
    flex: none;
}
.dock-group {
    display: flex;
    flex-direction: column;
    align-items: center;
    padding-top: 4px;
    border-bottom: 1px solid #333;
}
.dock-group .grip {
    margin-bottom: 8px;
}
.dock-group.one {
    height: 43px;
}
.dock-group.one .grip {
    margin-bottom: 6px;
}
.dock-group.two {
    height: 72px;
}
.dock-group.two svg + svg {
    margin-top: 14px;
}
.dock-group.three {
    height: 71px;
    padding-top: 3px;
}
.dock-group.three .grip {
    margin-bottom: 10px;
}
.dock-group.three svg + svg {
    margin-top: 12px;
}

/* properties panel */
.props {
    flex: 1;
    background: #494949;
}
.props-tabs {
    display: flex;
    height: 28px;
    background: #3a3a3a;
}
.ptab {
    display: flex;
    align-items: center;
    justify-content: center;
    width: 53px;
    padding-left: 4px;
    border-right: 1px solid #2f2f2f;
    border-bottom: 1px solid #2f2f2f;
    font-size: 12px;
    font-weight: 700;
    color: #a8a8a8;
    letter-spacing: -0.150px;
}
.ptab.on {
    width: 85px;
    padding-left: 0;
    background: #494949;
    border-bottom: none;
    color: #fff;
}
.ptab:last-child {
    width: 84px;
    padding-left: 9px;
    white-space: nowrap;
}
.section {
    position: relative;
    padding-left: 10.500px;
    border-bottom: 1px solid #424242;
}
.section h4 {
    margin: 0;
    font-size: 10.600px;
    line-height: 14px;
    font-weight: 600;
}
.object {
    height: 35px;
    line-height: 35px;
}
.transform {
    height: 111px;
    padding-top: 11px;
}
.xform {
    display: flex;
    margin-top: 9px;
}
.proxy {
    margin: 10px 0 0 5.500px;
}
.fields {
    display: grid;
    grid-template-columns: 29px 56px 28px 56px;
    row-gap: 6px;
}
.fields label {
    line-height: 20px;
    text-align: right;
    padding-right: 4px;
}
.input {
    height: 20px;
    line-height: 18px;
    padding-left: 5px;
    background: #3c3c3c;
    border: 1px solid #666;
    border-radius: 2px;
}
.unlink {
    margin: 15px 0 0 9px;
}
.dots {
    display: flex;
    gap: 1.500px;
    justify-content: flex-end;
    padding-right: 18px;
}
.dots i {
    width: 4px;
    height: 4px;
    border-radius: 50%;
    background: #c6c6c6;
}
.transform .dots {
    margin-top: 14px;
}
.appearance {
    height: 155px;
    padding-top: 10px;
}
.arow {
    display: flex;
    align-items: center;
    height: 30px;
    padding-left: 4px;
}
.appearance h4 + .arow {
    margin-top: 5px;
}
.sw {
    width: 18px;
    height: 18px;
    margin-right: 13px;
}
.sw.pink {
    background: #f5007e;
}
.sw.black {
    border: 5px solid #000;
    background: #555;
}
.sw-opacity {
    margin: 0 15px 0 1px;
}
.link {
    width: 64px;
    color: #c8c8c8;
    text-decoration: underline;
    text-underline-offset: 2px;
}
.combo {
    display: flex;
    height: 22px;
    margin-top: -1px;
    border: 1px solid #666;
    border-radius: 2px;
    background: #3c3c3c;
}
.cell {
    display: flex;
    align-items: center;
    justify-content: center;
    border-right: 1px solid #666;
}
.cell:last-child {
    border: none;
}
.step { width: 17px; }
.drop { width: 18px; }
.stroke-w { width: 72px; }
.stroke-w .val { width: 35px; }
.opacity { width: 72px; }
.opacity .val {
    width: 52px;
    justify-content: flex-start;
    padding-left: 4px;
}
.style {
    margin-left: 6px;
}
.light {
    width: 37px;
    background: #dedede;
}
.light i {
    width: 23px;
    height: 8px;
    margin-right: 4px;
    background: #000;
}
.arow.last {
    padding-left: 7px;
}
.fx {
    margin-left: 13px;
    font: italic 15px "Noto Sans", sans-serif;
    color: #bdbdbd;
}
.fx::after {
    content: "";
    display: inline-block;
    border: 1.500px solid transparent;
    border-top: 2.500px solid #bdbdbd;
    border-bottom: none;
}
.align {
    height: 65px;
    padding-top: 10px;
}
.align-icons {
    display: flex;
    align-items: center;
    gap: 15.200px;
    margin: 12px 0 0 4px;
}
.wrap {
    height: 88px;
    padding-top: 10px;
}
.wrap-icons {
    display: flex;
    align-items: center;
    height: 22px;
    margin-top: 10px;
    color: #8a8a8a;
    font-weight: 500;
}
.wi {
    display: flex;
    align-items: center;
    justify-content: center;
    width: 23px;
    height: 22px;
    margin-right: 8px;
    border-radius: 2px;
}
.wi.on {
    background: #2b2b2b;
}
.checkbox {
    width: 12px;
    height: 12px;
    margin: -3px 7px 0 0;
    border: 1px solid #707070;
    border-radius: 2px;
}
.wrap-icons span {
    margin-top: -3px;
}
.wrap .dots {
    margin-top: 16px;
    padding-right: 13px;
}
.quick {
    padding-top: 6px;
    border: none;
}
.buttons {
    display: flex;
    flex-wrap: wrap;
    gap: 10px;
    margin: 8px 0 0 -0.500px;
    width: 227px;
}
.btn {
    width: 227px;
    height: 22px;
    line-height: 20px;
    text-align: center;
    border: 1px solid #6a6a6a;
    border-radius: 2px;
}
.btn.half {
    width: 108.500px;
}

/* floating animation panel */
.float-panel {
    position: absolute;
    left: 800px;
    top: 268px;
    width: 237px;
    height: 471px;
    overflow: hidden;
    background: #494949;
    border-radius: 5px;
    box-shadow: 1px 0 4px rgba(0, 0, 0, .5);
}
.fp-head {
    display: flex;
    align-items: center;
    justify-content: flex-end;
    height: 15px;
    padding-right: 7px;
    background: #3c3c3c;
    border-bottom: 1px solid #2e2e2e;
}
.fp-tabs {
    display: flex;
    justify-content: flex-end;
    height: 30px;
    padding: 9px 6px 0 0;
    background: #3a3a3a;
}
.fp-body {
    padding-top: 245px;
}
.fp-row {
    display: flex;
    align-items: center;
    height: 22px;
    margin-bottom: 5px;
    gap: 5px;
}
.fp-input {
    width: 94px;
    height: 22px;
    background: #3c3c3c;
    border: 1px solid #686868;
    border-radius: 2px;
}
.fp-row .time {
    width: 46px;
}
.fp-check {
    width: 12px;
    height: 12px;
    border: 1px solid #c0c0c0;
    border-radius: 2px;
}
.fp-select {
    display: flex;
    align-items: center;
    width: 211px;
    height: 22px;
    margin-left: 20px;
    background: #3c3c3c;
    border: 1px solid #686868;
    border-radius: 2px;
}
.fp-select span {
    flex: 1;
    padding-left: 53px;
}
.fp-select div {
    display: flex;
    align-items: center;
    justify-content: center;
    width: 18px;
    height: 20px;
    border-left: 1px solid #686868;
}
.fp-select.location {
    margin-top: 22px;
}
.fp-select.location span {
    padding-left: 40px;
}
.fp-label {
    margin-top: 7px;
    height: 18px;
    line-height: 18px;
    padding-left: 43px;
}
.fp-select.small {
    width: 102px;
}
.fp-row.origin {
    margin-top: 7px;
    justify-content: space-between;
    padding-right: 8px;
}
.origin > svg {
    margin-top: -10px;
}
.fp-row.tail .fp-input {
    width: 112px;
}
.fp-row.tail .wide {
    margin-left: 21px;
    width: 72px;
}

/* menus */
.menu {
    position: absolute;
    border-radius: 5px;
    color: #232323;
    font-family: Inter, sans-serif;
    font-size: 13.500px;
    letter-spacing: -0.120px;
    font-weight: 400;
    box-shadow: 0 0 0 1px rgba(60, 60, 60, .4), 0 4px 22px rgba(0, 0, 0, .35);
}
.main-menu {
    left: 553px;
    top: 3px;
    width: 325px;
    height: 760px;
}
.sub-menu {
    left: 873px;
    top: 312px;
    width: 273px;
    height: 237px;
}
.glass {
    position: absolute;
    inset: 0;
    overflow: hidden;
    border-radius: 5px;
    background: #e3e3e1;
}
.glass i {
    position: absolute;
}
.main-menu .top {
    left: -60px;
    top: -60px;
    width: 460px;
    height: 148px;
    background: #a2a1a0;
    filter: blur(17px);
}
.main-menu .mid {
    left: 222px;
    top: 245px;
    width: 170px;
    height: 66px;
    border-radius: 33px;
    background: #b9b8b8;
    filter: blur(20px);
}
.main-menu .side {
    left: 204px;
    top: 450px;
    width: 240px;
    height: 420px;
    background: #a8a7a6;
    filter: blur(25px);
}
.main-menu .glow {
    left: -120px;
    top: 340px;
    width: 308px;
    height: 290px;
    border-radius: 50%;
    background: #fc78d1;
    filter: blur(27px);
}
.sub-menu .side {
    left: 160px;
    top: -60px;
    width: 200px;
    height: 400px;
    background: #a8a7a6;
    filter: blur(20px);
}
.sub-menu .base {
    left: -60px;
    top: 158px;
    width: 400px;
    height: 200px;
    background: #adacac;
    filter: blur(22px);
}
.sub-menu .glow {
    left: -40px;
    top: 35px;
    width: 80px;
    height: 100px;
    border-radius: 50%;
    background: #ecccd8;
    filter: blur(18px);
}
.items {
    position: relative;
    padding: 6px 5px;
}
.sub-menu .items {
    padding-top: 5.500px;
}
.item {
    position: relative;
    display: flex;
    align-items: center;
    height: 22.700px;
    padding: 0 0 0 19.500px;
    border-radius: 4px;
    white-space: nowrap;
}
.item.hover {
    background: linear-gradient(90deg, rgba(180, 80, 125, .26), rgba(90, 80, 85, .2) 60%);
}
.item.new {
    height: 24.800px;
}
.dot {
    width: 8.500px;
    height: 8.500px;
    margin: 0 6px 0 -0.500px;
    border-radius: 50%;
    background: #006fe6;
}
.chev {
    width: 8px;
    height: 12px;
    margin: 0 10px 0 auto;
}
.check {
    position: absolute;
    left: 5px;
    top: 6px;
    width: 11px;
    height: 11px;
}
.sep {
    height: 11.300px;
    padding: 4px 9px 0;
}
.sep::before {
    content: "";
    display: block;
    height: 1px;
    background: rgba(0, 0, 0, .15);
}
kbd {
    display: flex;
    align-items: center;
    margin-left: auto;
    color: rgba(0, 0, 0, .34);
    font-family: Inter, "DejaVu Sans", sans-serif;
    font-size: 13px;
    letter-spacing: 0;
}
kbd b {
    width: 14.500px;
    font-family: "DejaVu Sans", sans-serif;
    font-weight: 400;
    line-height: 16px;
    text-align: center;
}
kbd .shift {
    font-size: 16px;
}
kbd u {
    width: 22px;
    margin-left: 2px;
    text-decoration: none;
}
kbd .fn {
    font-size: 10.500px;
}
.sub-menu kbd {
    margin-right: 11px;
}

/* guided tour */
.beacon {
    position: absolute;
    left: 943px;
    top: 523px;
    width: 22px;
    height: 22px;
    border-radius: 50%;
    background: #8f2fe3;
}
.tour {
    position: absolute;
    left: 984px;
    top: 453px;
    width: 250px;
    height: 163px;
    padding: 15px 16px 16px;
    border-radius: 9px;
    background: #8f2fe3;
    box-shadow: 0 4px 22px rgba(40, 40, 110, .5);
    font-family: Inter, sans-serif;
    letter-spacing: 0;
    color: #f3eafd;
}
.tour::before {
    content: "";
    position: absolute;
    left: -14px;
    top: 70px;
    border: 11px solid transparent;
    border-right: 15px solid #8f2fe3;
    border-left: none;
}
.tour p {
    margin: 0;
    font-size: 14.300px;
    line-height: 21px;
    font-weight: 500;
    letter-spacing: 0.270px;
    white-space: nowrap;
}
.tour p b {
    font-weight: 700;
    letter-spacing: -0.300px;
    color: #fff;
}
.tour-nav {
    display: flex;
    align-items: center;
    margin-top: 16px;
    font-size: 14px;
    font-weight: 400;
}
.tour-nav span {
    margin-left: 15px;
    color: #dcc5f7;
}
.tour-nav button {
    width: 54px;
    height: 32px;
    margin-left: auto;
    padding: 0;
    border: none;
    border-radius: 5px;
    background: #fff;
    color: #17123d;
    font: 500 14.500px Inter, sans-serif;
}
```
